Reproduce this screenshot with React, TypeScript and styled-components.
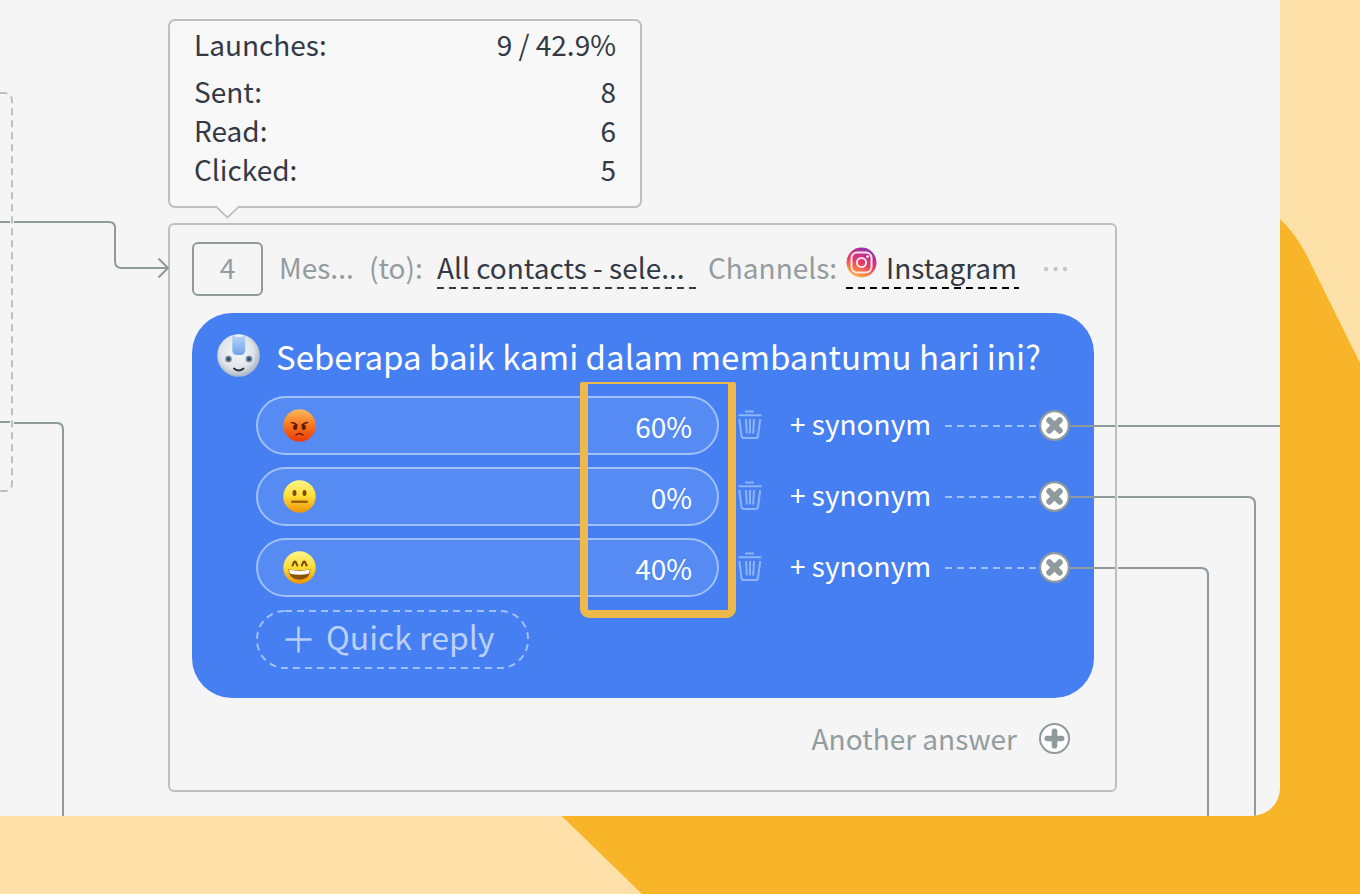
import React from "react";
import styled, { createGlobalStyle } from "styled-components";

const color = {
  peach: "#fde1a9",
  orange: "#f9b52a",
  canvas: "#f5f5f5",
  line: "#8f9a9d",
  border: "#bfbfbf",
  muted: "#939c9e",
  ink: "#333a46",
  blue: "#457ff2",
  pill: "#558bf2",
  pillBorder: "#a2c0f8",
  frame: "#efb84b",
};

const GlobalStyle = createGlobalStyle`
  *, *::before, *::after { box-sizing: border-box; }
  body {
    margin: 0;
    font-family: "Noto Sans CJK SC", "Noto Sans", sans-serif;
    font-size: 28px;
    line-height: 40px;
    color: ${color.ink};
  }
  button {
    font: inherit;
    color: inherit;
    background: none;
    border: 0;
    padding: 0;
    margin: 0;
    cursor: pointer;
    white-space: nowrap;
    text-align: left;
  }
`;

const Page = styled.div`
  position: relative;
  display: flex;
  min-height: 100vh;
  padding: 0 80px 78px 0;
  background: ${color.peach};
`;

const Backdrop = styled.svg`
  position: absolute;
  inset: 0;
  width: 100%;
  height: 100%;
`;

const Board = styled.main`
  position: relative;
  flex: 1;
  min-width: 0;
  overflow: hidden;
  padding: 19px 0 24px 168px;
  background: ${color.canvas};
  border-bottom-right-radius: 28px;
`;

const Wires = styled.svg`
  position: absolute;
  inset: 0;
  width: 100%;
  height: 100%;
  pointer-events: none;
`;

const StatsCard = styled.dl`
  position: relative;
  width: 474px;
  margin: 0 0 15px;
  padding: 4px 24px 17px 24px;
  background: #f8f8f8;
  border: 2px solid ${color.border};
  border-radius: 7px;
`;

const StatRow = styled.div<{ $lead?: boolean }>`
  display: flex;
  justify-content: space-between;
  line-height: 39px;
  margin-bottom: ${(p) => (p.$lead ? 8 : 0)}px;
  dd { margin: 0; }
`;

const Pointer = styled.svg`
  position: absolute;
  left: 44px;
  bottom: -13px;
`;

const Node = styled.section`
  width: 949px;
  padding: 17px 21px 32px 22px;
  border: 2px solid ${color.border};
  border-radius: 6px;
`;

const NodeHeader = styled.header`
  display: flex;
  align-items: flex-start;
  margin-bottom: 17px;
`;

const StepNumber = styled.div`
  width: 71px;
  height: 54px;
  padding-top: 3px;
  text-align: center;
  color: ${color.muted};
  border: 2px solid ${color.line};
  border-radius: 6px;
`;

const HeaderFields = styled.div`
  display: grid;
  grid-template-columns: 90px 68px 271px 138px 197px auto;
  justify-items: start;
  padding: 5px 0 0 16px;
  white-space: nowrap;
`;

const Label = styled.span`
  color: ${color.muted};
`;

const DashedLink = styled.button<{ $dash: string; $width: number }>`
  display: flex;
  gap: 9px;
  width: ${(p) => p.$width}px;
  height: 42px;
  background: repeating-linear-gradient(90deg, ${(p) => p.$dash} 0 7px, transparent 7px 12px)
    left bottom / 100% 2px no-repeat;
`;

const MoreButton = styled.button`
  display: flex;
  align-items: center;
  height: 44px;
`;

const Bubble = styled.div`
  padding: 21px 24px 29px 25px;
  background: ${color.blue};
  border-radius: 40px;
  color: #fff;
`;

const Question = styled.h1`
  display: flex;
  align-items: center;
  gap: 16px;
  height: 43px;
  margin: 0 0 19px;
  font-size: 33px;
  font-weight: 400;
  white-space: nowrap;
`;

const Replies = styled.div`
  position: relative;
  padding-left: 39px;
`;

const ReplyList = styled.ul`
  display: grid;
  gap: 12px;
  list-style: none;
  margin: 0 0 13px;
  padding: 0;
`;

const ReplyRow = styled.li`
  display: flex;
  align-items: center;
`;

const Pill = styled.div`
  display: flex;
  align-items: center;
  justify-content: space-between;
  width: 463px;
  height: 59px;
  padding: 0 25px;
  background: ${color.pill};
  border: 2px solid ${color.pillBorder};
  border-radius: 30px;
`;

const TrashButton = styled.button`
  display: flex;
  margin-left: 19px;
  padding-bottom: 3px;
`;

const SynonymButton = styled.button`
  width: 141px;
  margin-left: 28px;
  padding-bottom: 5px;
`;

const Dash = styled.span`
  flex: 1;
  height: 2px;
  margin-left: 14px;
  background: repeating-linear-gradient(90deg, ${color.pillBorder} 0 7px, transparent 7px 12px);
`;

const RoundButton = styled.button`
  display: flex;
`;

const QuickReply = styled.button`
  position: relative;
  display: flex;
  align-items: center;
  gap: 14px;
  width: 273px;
  height: 59px;
  padding-left: 29px;
  font-size: 32px;
  color: #bcd1fa;
`;

const QuickOutline = styled.svg`
  position: absolute;
  inset: 0;
`;

const QuickText = styled.span`
  padding-bottom: 7px;
`;

const Highlight = styled.div`
  position: absolute;
  left: 363px;
  top: -14px;
  width: 156px;
  height: 236px;
  border: solid ${color.frame};
  border-width: 2px 8px 8px;
  border-radius: 2px 2px 9px 9px;
  pointer-events: none;
`;

const NodeFooter = styled.footer`
  display: flex;
  justify-content: flex-end;
  margin-top: 20px;
  padding-right: 24px;
`;

const AnswerButton = styled.button`
  display: flex;
  align-items: center;
  gap: 22px;
  color: ${color.muted};
`;

function Avatar() {
  return (
    <svg width="43" height="43" viewBox="0 0 43 43" aria-hidden="true">
      <defs>
        <radialGradient id="head" cx="0.46" cy="0.42" r="0.6">
          <stop offset="0" stopColor="#f7f9fa" />
          <stop offset="0.65" stopColor="#dfe4e9" />
          <stop offset="1" stopColor="#a3b1c1" />
        </radialGradient>
        <linearGradient id="visor" x1="0" y1="0" x2="0" y2="1">
          <stop offset="0" stopColor="#b7d3f8" />
          <stop offset="1" stopColor="#6fa3e8" />
        </linearGradient>
      </defs>
      <circle cx="21.500" cy="21.500" r="21.300" fill="url(#head)" />
      <path d="M15.300 1.500h12.900v14.500q0 5-5 5h-2.900q-5 0-5-5z" fill="url(#visor)" />
      <ellipse cx="21.700" cy="1.700" rx="4.200" ry="1.200" fill="#eef2f5" />
      <circle cx="11.500" cy="25" r="3.200" fill="#76828f" />
      <circle cx="32" cy="25" r="3.200" fill="#76828f" />
      <circle cx="11.500" cy="25" r="1.700" fill="#1f4f86" />
      <circle cx="32" cy="25" r="1.700" fill="#1f4f86" />
      <path d="M17 34.500q4.800 4 9.500 0" fill="none" stroke="#2b333d" strokeWidth="1.900" strokeLinecap="round" />
    </svg>
  );
}

function InstagramIcon() {
  return (
    <svg width="31" height="31" viewBox="0 0 31 31" aria-hidden="true">
      <defs>
        <linearGradient id="ig" x1="0.25" y1="1" x2="0.7" y2="0">
          <stop offset="0" stopColor="#fdc04c" />
          <stop offset="0.25" stopColor="#f9783f" />
          <stop offset="0.5" stopColor="#e63a68" />
          <stop offset="0.75" stopColor="#c12f8f" />
          <stop offset="1" stopColor="#8a35b5" />
        </linearGradient>
      </defs>
      <circle cx="15.500" cy="15.500" r="15" fill="url(#ig)" />
      <g fill="none" stroke="#fbe3ea" strokeWidth="2">
        <rect x="5.500" y="5.500" width="20" height="20" rx="5.500" />
        <circle cx="15.500" cy="15.500" r="4.600" />
      </g>
      <circle cx="21.600" cy="9.600" r="1.300" fill="#fff" />
    </svg>
  );
}

type Mood = "angry" | "neutral" | "happy";

function Emoji({ mood }: { mood: Mood }) {
  const id = `face-${mood}`;
  const angry = mood === "angry";
  return (
    <svg width="33" height="33" viewBox="0 0 33 33" role="img" aria-label={mood}>
      <defs>
        <linearGradient id={id} x1="0" y1="0" x2="0" y2="1">
          <stop offset="0" stopColor={angry ? "#fcb95a" : "#fff587"} />
          <stop offset="0.5" stopColor={angry ? "#f7761f" : "#fddc35"} />
          <stop offset="1" stopColor={angry ? "#ea3a05" : "#ee930a"} />
        </linearGradient>
      </defs>
      <circle cx="16.500" cy="16.500" r="16.200" fill={`url(#${id})`} />
      {mood === "angry" && (
        <g fill="none" stroke="#5f1a02" strokeWidth="1.500" strokeLinecap="round">
          <path d="M8.500 13.500q3 .3 5.500 2.500M24.500 13.500q-3 .3-5.500 2.500" />
          <ellipse cx="12.200" cy="18.200" rx="1.300" ry="2" fill="#5f1a02" />
          <ellipse cx="20.800" cy="18.200" rx="1.300" ry="2" fill="#5f1a02" />
          <path d="M13 26q3.500-3 7 0" />
        </g>
      )}
      {mood === "neutral" && (
        <g fill="#7d4a05">
          <ellipse cx="11.500" cy="13" rx="2" ry="3" />
          <ellipse cx="21.500" cy="13" rx="2" ry="3" />
          <rect x="8" y="20.500" width="17" height="2.400" rx="1.200" fill="#9a6108" />
        </g>
      )}
      {mood === "happy" && (
        <g>
          <path
            d="M9.500 14.500l1.600-3.600q.8-1 1.600 0l1.600 3.600M18.800 14.500l1.600-3.600q.8-1 1.600 0l1.600 3.600"
            fill="none"
            stroke="#7d4a05"
            strokeWidth="2"
            strokeLinecap="round"
          />
          <path d="M5.300 18q11.200 3 22.400 0q-.8 10.500-11.200 10.700q-10.400-.2-11.200-10.700z" fill="#8a5208" />
          <path d="M6 18.600q10.500 2.600 21 0q-.2 2.300-1.300 4.100q-9.200 1.900-18.400 0q-1.100-1.800-1.300-4.100z" fill="#fff" />
        </g>
      )}
    </svg>
  );
}

function TrashIcon() {
  return (
    <svg width="24" height="29" viewBox="0 0 24 29" fill="none" stroke="#8fb3f8" strokeWidth="2" aria-hidden="true">
      <path d="M7 1.500h9M0.500 5.200h23" />
      <path d="M1.300 9l2.200 17q.3 2 2.200 2h12.100q1.900 0 2.200-2l2.200-17" />
      <path d="M8 9l.8 14.500M12 9v14.500M16 9l-.8 14.500" />
    </svg>
  );
}

function CrossIcon() {
  return (
    <svg width="31" height="31" viewBox="0 0 31 31" aria-hidden="true">
      <circle cx="15.500" cy="15.500" r="14.300" fill="#fff" stroke={color.line} strokeWidth="2.200" />
      <path d="M10.300 10.300l10.400 10.400M20.700 10.300l-10.400 10.400" stroke={color.line} strokeWidth="6" strokeLinecap="round" />
    </svg>
  );
}

function AddIcon() {
  return (
    <svg width="31" height="31" viewBox="0 0 31 31" aria-hidden="true">
      <circle cx="15.500" cy="15.500" r="14.500" fill="#fff" stroke={color.line} strokeWidth="2" />
      <path d="M15.500 8.300v14.400M8.300 15.500h14.400" stroke={color.line} strokeWidth="5.600" strokeLinecap="round" />
    </svg>
  );
}

const stats: [string, string][] = [
  ["Launches:", "9 / 42.9%"],
  ["Sent:", "8"],
  ["Read:", "6"],
  ["Clicked:", "5"],
];

const replies: { mood: Mood; share: string }[] = [
  { mood: "angry", share: "60%" },
  { mood: "neutral", share: "0%" },
  { mood: "happy", share: "40%" },
];

export default function App() {
  return (
    <>
      <GlobalStyle />
      <Page>
        <Backdrop viewBox="0 0 1360 894" preserveAspectRatio="xMaxYMax slice" aria-hidden="true">
          <path d="M540 795L642 894H1360V363L1309 260Q1297 235 1280 219L1200 150V795Z" fill={color.orange} />
        </Backdrop>
        <Board>
          <StatsCard>
            {stats.map(([name, value], i) => (
              <StatRow key={name} $lead={i === 0}>
                <dt>{name}</dt>
                <dd>{value}</dd>
              </StatRow>
            ))}
            <Pointer width="27" height="14" viewBox="0 0 27 14" aria-hidden="true">
              <path d="M1 0L13.500 12L26 0" fill="#f8f8f8" />
              <path d="M1.500 1.200L13.500 12.500L25.500 1.200" fill="none" stroke={color.border} strokeWidth="1.800" />
            </Pointer>
          </StatsCard>

          <Node>
            <NodeHeader>
              <StepNumber>4</StepNumber>
              <HeaderFields>
                <Label>Mes...</Label>
                <Label>(to):</Label>
                <DashedLink type="button" $dash={color.ink} $width={259}>
                  All contacts - sele...
                </DashedLink>
                <Label>Channels:</Label>
                <DashedLink type="button" $dash="#000" $width={173}>
                  <InstagramIcon />
                  Instagram
                </DashedLink>
                <MoreButton type="button" aria-label="More">
                  <svg width="26" height="6" viewBox="0 0 26 6" fill="#c4c7c8" aria-hidden="true">
                    <circle cx="3" cy="3" r="2.200" />
                    <circle cx="12.500" cy="3" r="2.200" />
                    <circle cx="22" cy="3" r="2.200" />
                  </svg>
                </MoreButton>
              </HeaderFields>
            </NodeHeader>

            <Bubble>
              <Question>
                <Avatar />
                Seberapa baik kami dalam membantumu hari ini?
              </Question>
              <Replies>
                <ReplyList>
                  {replies.map(({ mood, share }) => (
                    <ReplyRow key={mood}>
                      <Pill>
                        <Emoji mood={mood} />
                        <span>{share}</span>
                      </Pill>
                      <TrashButton type="button" aria-label="Delete reply">
                        <TrashIcon />
                      </TrashButton>
                      <SynonymButton type="button">+ synonym</SynonymButton>
                      <Dash />
                      <RoundButton type="button" aria-label="Disconnect">
                        <CrossIcon />
                      </RoundButton>
                    </ReplyRow>
                  ))}
                </ReplyList>
                <QuickReply type="button">
                  <QuickOutline width="273" height="59" aria-hidden="true">
                    <rect x="1" y="1" width="271" height="57" rx="28" fill="none" stroke={color.pillBorder} strokeWidth="2" strokeDasharray="7 5" />
                  </QuickOutline>
                  <svg width="27" height="27" viewBox="0 0 27 27" stroke="#bcd1fa" strokeWidth="2.400" aria-hidden="true">
                    <path d="M13.500 0.500v26M0.500 13.500h26" />
                  </svg>
                  <QuickText>Quick reply</QuickText>
                </QuickReply>
                <Highlight />
              </Replies>
            </Bubble>

            <NodeFooter>
              <AnswerButton type="button">
                Another answer
                <AddIcon />
              </AnswerButton>
            </NodeFooter>
          </Node>

          <Wires fill="none" stroke={color.line} strokeWidth="2" aria-hidden="true">
            <path d="M0 93H4Q12 93 12 101V483Q12 491 4 491H0" stroke={color.border} strokeDasharray="7 5" />
            <path d="M0 222H10M14 222H109Q115 222 115 228V261Q115 268 122 268H167" />
            <path d="M158.500 258.500L168 268L158.500 277.500" />
            <path d="M0 422H10M14 423H57Q63 423 63 430V2000" />
            <path d="M1070 426H1115M1118 426H3000" />
            <path d="M1070 497H1115M1118 497H1248Q1255 497 1255 504V2000" />
            <path d="M1070 568H1115M1118 568H1201Q1208 568 1208 575V2000" />
          </Wires>
        </Board>
      </Page>
    </>
  );
}
